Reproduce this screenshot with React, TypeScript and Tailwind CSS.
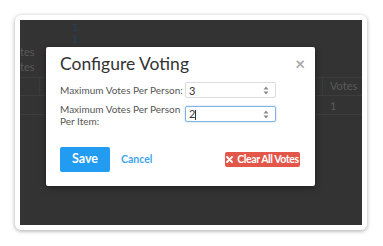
import React from "react";

function Spinner() {
  return (
    <svg width="6" height="9" viewBox="0 0 6 9" className="shrink-0">
      <path d="M3 0.5 L5.5 3.5 H0.5 Z" fill="#8a8a8a" />
      <path d="M3 8.5 L5.5 5.5 H0.5 Z" fill="#8a8a8a" />
    </svg>
  );
}

export default function App() {
  const font = { fontFamily: "Lato, 'Open Sans', sans-serif" };
  return (
    <div className="w-[383px] h-[246px] bg-white pt-[15px] pl-[15px]" style={font}>
      <div className="w-[352px] h-[215px] bg-white rounded-[6px] p-[5px] shadow-[0_1px_4px_rgba(0,0,0,0.35)]">
        <div className="relative w-[342px] h-[205px] bg-[#333333] overflow-hidden">
          {/* faded background page */}
          <div className="absolute left-[52px] top-[1px] text-[11px] leading-[12px] text-[#23405e]">1</div>
          <div className="absolute left-[52px] top-[13px] text-[11px] leading-[12px] text-[#23405e]">1</div>
          <div className="absolute left-0 top-[26px] text-[11px] leading-[12px] text-[#5a5a5a]">tes</div>
          <div className="absolute left-0 top-[41px] text-[11px] leading-[12px] text-[#5a5a5a]">tes</div>
          <div className="absolute left-0 right-0 top-[57px] h-px bg-[#3b3b3b]" />
          <div className="absolute left-0 right-0 top-[75px] h-px bg-[#3d3d3d]" />
          <div className="absolute left-0 right-0 top-[94px] h-px bg-[#3d3d3d]" />
          <div className="absolute left-[19px] top-[57px] w-px h-[18px] bg-[#3b3b3b]" />
          <div className="absolute left-[302px] top-[57px] w-px h-[18px] bg-[#3b3b3b]" />
          <div className="absolute left-[310px] top-[60px] text-[11px] leading-[12px] text-[#5a5a5a]">Votes</div>
          <div className="absolute left-[310px] top-[80px] text-[11px] leading-[12px] text-[#5a5a5a]">1</div>

          {/* modal */}
          <div className="absolute left-[26px] top-[27px] w-[269px] h-[139px] bg-white rounded-[2px] shadow-[0_2px_6px_rgba(0,0,0,0.4)] px-[14px] pt-[6px]">
            <div className="flex items-start justify-between">
              <div className="text-[17.5px] leading-[22px] text-[#333333]">Configure Voting</div>
              <div className="text-[17px] leading-[17px] text-[#a9a9a9] font-bold mt-[2px] mr-[-4px]">×</div>
            </div>
            <div className="mt-[7px] flex items-center">
              <div className="w-[125px] whitespace-nowrap text-[10px] leading-[11px] text-[#555555]">Maximum Votes Per Person:</div>
              <div className="w-[91px] h-[16px] border border-[#dcdcdc] rounded-[2px] flex items-center justify-between pl-[3px] pr-[6px]">
                <span className="text-[11px] text-[#333333] leading-[11px]">3</span>
                <Spinner />
              </div>
            </div>
            <div className="mt-[8px] flex items-start">
              <div className="w-[125px] whitespace-nowrap text-[10px] leading-[11.5px] text-[#555555] -mt-[2px]">
                Maximum Votes Per Person
                <br />
                Per Item:
              </div>
              <div className="w-[91px] h-[16px] border border-[#7fb4e6] rounded-[2px] flex items-center justify-between pl-[3px] pr-[6px] shadow-[0_0_2px_rgba(80,150,230,0.5)]">
                <span className="text-[11px] text-[#333333] leading-[11px]">2<span className="inline-block w-px h-[10px] bg-[#333] align-middle" /></span>
                <Spinner />
              </div>
            </div>
            <div className="mt-[20px] flex items-center">
              <div className="w-[50px] h-[25px] bg-[#229cf0] rounded-[2px] flex items-center justify-center text-white font-bold text-[12.5px]">Save</div>
              <div className="ml-[11px] text-[#3fa6ef] text-[10.5px] font-bold">Cancel</div>
              <div className="ml-auto mr-[1px] w-[75px] h-[15px] bg-[#e2574a] rounded-[2px] flex items-center justify-center gap-[4px] text-white font-bold text-[10.5px] tracking-[-0.4px]">
                <svg width="7" height="7" viewBox="0 0 7 7">
                  <path d="M1 1 L6 6 M6 1 L1 6" stroke="white" strokeWidth="1.8" strokeLinecap="round" />
                </svg>
                <span>Clear All Votes</span>
              </div>
            </div>
          </div>
        </div>
      </div>
    </div>
  );
}
